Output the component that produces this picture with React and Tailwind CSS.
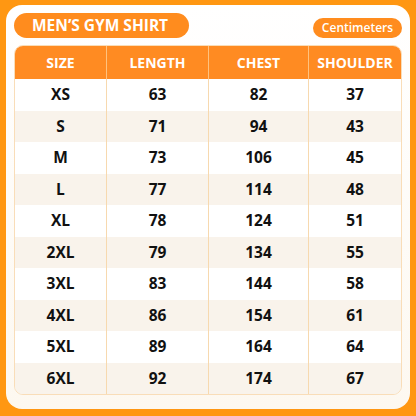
export default function App() {
  const rows = [
    ["XS", 63, 82, 37],
    ["S", 71, 94, 43],
    ["M", 73, 106, 45],
    ["L", 77, 114, 48],
    ["XL", 78, 124, 51],
    ["2XL", 79, 134, 55],
    ["3XL", 83, 144, 58],
    ["4XL", 86, 154, 61],
    ["5XL", 89, 164, 64],
    ["6XL", 92, 174, 67],
  ];
  return (
    <div className="w-[416px] h-[416px] bg-[#FF9712] pt-[5px] pl-[6px] pr-[6px] pb-[7px]" style={{ fontFamily: '"Open Sans", "Noto Sans", sans-serif' }}>
      <div className="h-full rounded-[16px] bg-gradient-to-b from-[#FFFFFF] to-[#FDF8F0] flex flex-col px-[8px] pt-[8px]">
        <div className="flex items-center justify-between h-[25px]">
          <div className="w-[175px] h-[25px] rounded-full bg-[#FF8C1E] flex items-center pl-[18px] text-white font-bold text-[15.5px] leading-none">
            MEN’S GYM SHIRT
          </div>
          <div className="mt-[4px] w-[89px] h-[20px] rounded-full bg-[#FF8C1E] flex items-center justify-center text-white font-semibold text-[12px] leading-none">
            Centimeters
          </div>
        </div>
        <div className="mt-[7px] rounded-[9px] border border-[#F9DDB8] overflow-hidden">
          <div className="grid grid-cols-[91px_102px_100px_1fr] bg-[#FF8B22] h-[33px] text-white font-bold text-[14px]">
            {["SIZE", "LENGTH", "CHEST", "SHOULDER"].map((h, i) => (
              <div key={h} className={`flex items-center justify-center ${i > 0 ? "border-l border-[#FFC27E]" : ""}`}>{h}</div>
            ))}
          </div>
          {rows.map((r, ri) => (
            <div key={r[0]} className={`grid grid-cols-[91px_102px_100px_1fr] h-[31.5px] text-[15.5px] font-bold text-[#111] ${ri % 2 === 1 ? "bg-[#F9F3EB]" : "bg-[#FFFFFF]"}`}>
              {r.map((c, i) => (
                <div key={i} className={`flex items-center justify-center ${i > 0 ? "border-l border-[#F7D9AF]" : ""}`}>{c}</div>
              ))}
            </div>
          ))}
        </div>
      </div>
    </div>
  );
}
